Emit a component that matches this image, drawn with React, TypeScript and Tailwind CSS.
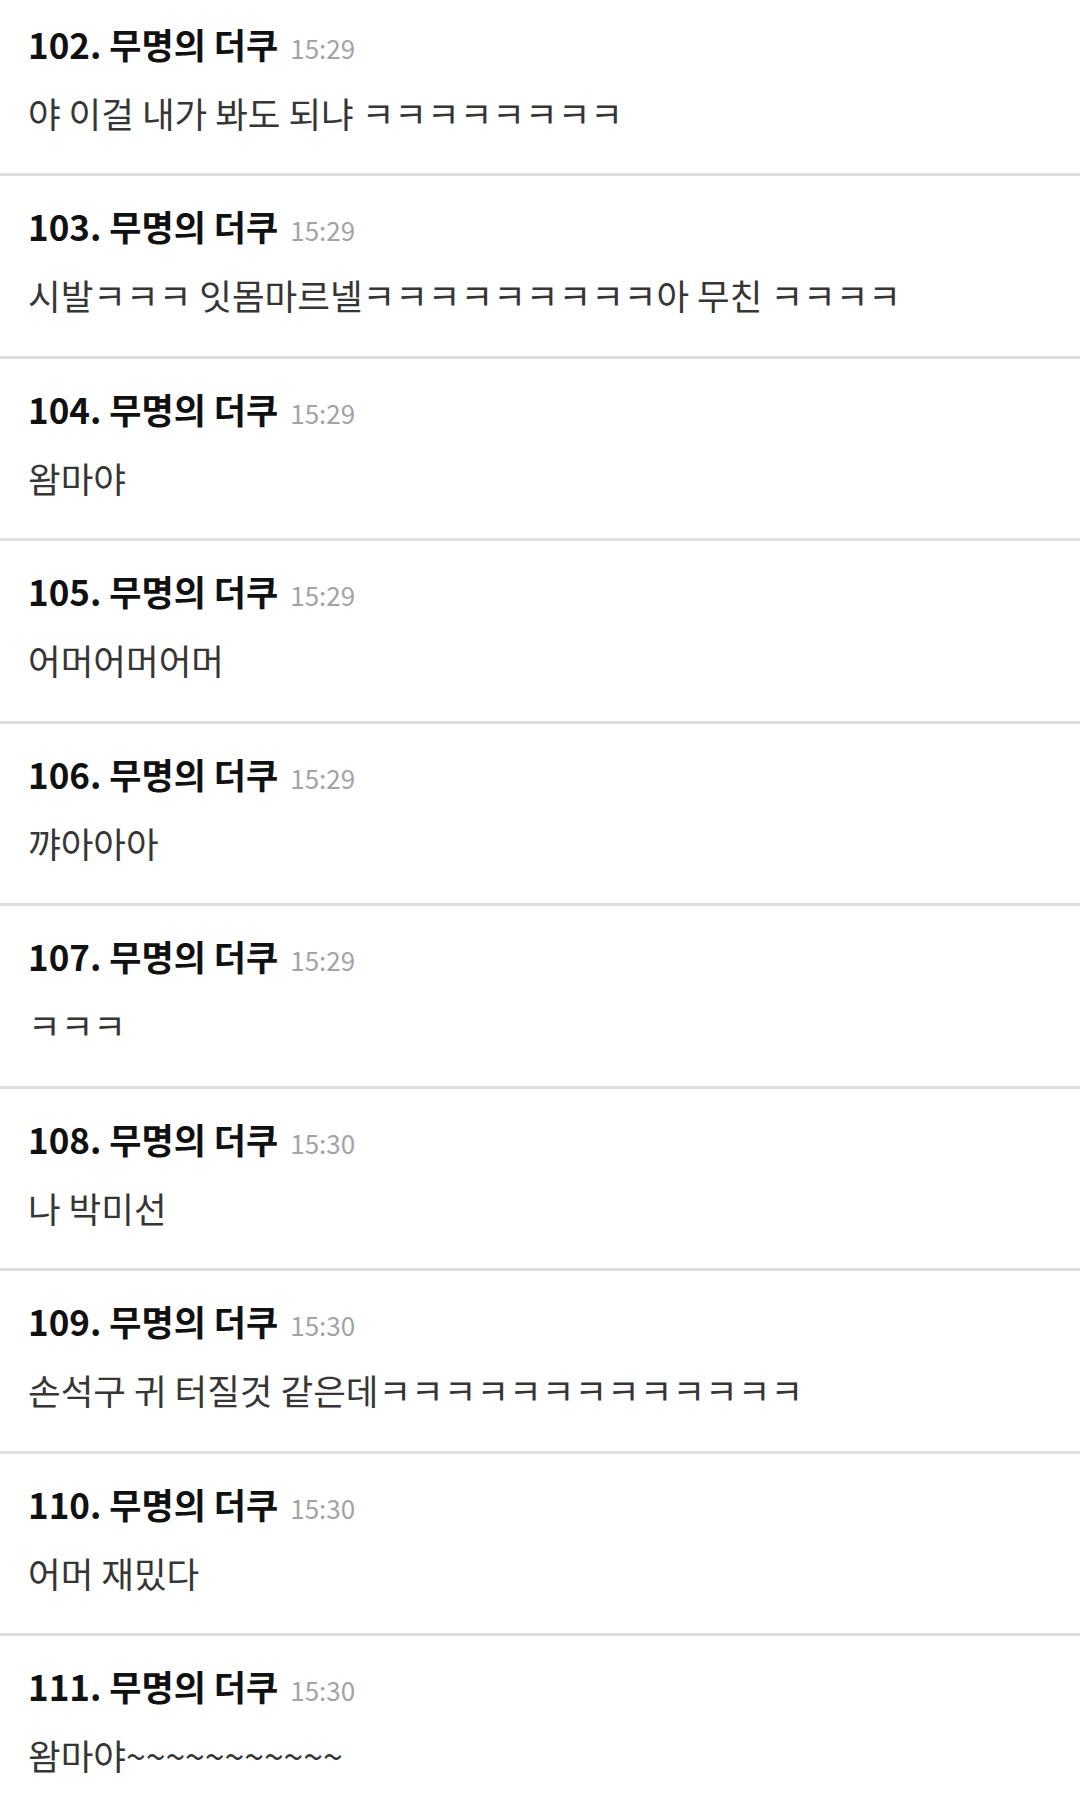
type Comment = {
  no: number;
  time: string;
  body: string;
};

const comments: Comment[] = [
  { no: 102, time: "15:29", body: "야 이걸 내가 봐도 되냐 ㅋㅋㅋㅋㅋㅋㅋㅋ" },
  {
    no: 103,
    time: "15:29",
    body: "시발ㅋㅋㅋ 잇몸마르넬ㅋㅋㅋㅋㅋㅋㅋㅋㅋ아 무친 ㅋㅋㅋㅋ",
  },
  { no: 104, time: "15:29", body: "왐마야" },
  { no: 105, time: "15:29", body: "어머어머어머" },
  { no: 106, time: "15:29", body: "꺄아아아" },
  { no: 107, time: "15:29", body: "ㅋㅋㅋ" },
  { no: 108, time: "15:30", body: "나 박미선" },
  { no: 109, time: "15:30", body: "손석구 귀 터질것 같은데ㅋㅋㅋㅋㅋㅋㅋㅋㅋㅋㅋㅋㅋ" },
  { no: 110, time: "15:30", body: "어머 재밌다" },
  { no: 111, time: "15:30", body: "왐마야~~~~~~~~~~~" },
];

const CommentRow = ({ comment }: { comment: Comment }) => {
  return (
    <article className="h-[182.5px] border-t-[3px] border-[#dfdfdf] pl-[28px] pt-[30px]">
      <header className="flex items-baseline gap-[12px]">
        <h3 className="text-[35px] leading-[40px] font-bold text-[#111111]">
          {comment.no}. 무명의 더쿠
        </h3>
        <span className="text-[26px] leading-[40px] text-[#a3a3a3]">
          {comment.time}
        </span>
      </header>
      <p className="mt-[25px] whitespace-nowrap text-[35.5px] leading-[40px] text-[#363636]">
        {comment.body}
      </p>
    </article>
  );
};

export default function App() {
  return (
    <div className="h-[1795px] w-[1080px] overflow-hidden bg-white font-['Noto_Sans_CJK_KR','Noto_Sans',sans-serif]">
      {/* list is scrolled a bit, first divider sits above the viewport */}
      <div className="-mt-[9.5px] flex flex-col">
        {comments.map((comment) => (
          <CommentRow key={comment.no} comment={comment} />
        ))}
      </div>
    </div>
  );
}
